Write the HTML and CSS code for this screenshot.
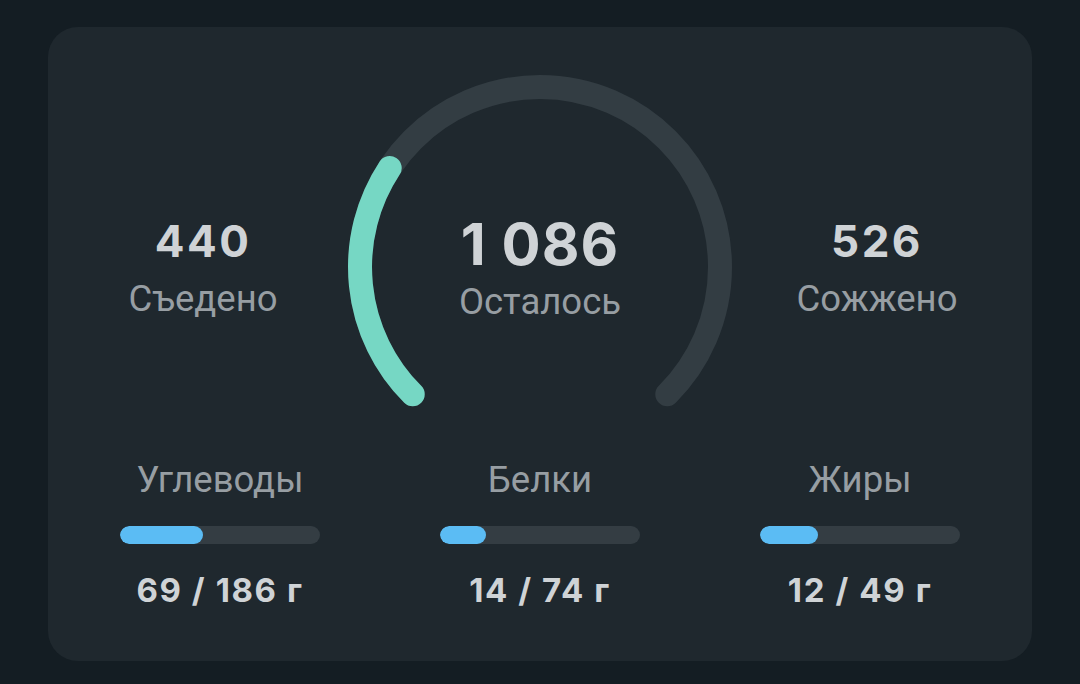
FILE: index.html
```html
<!DOCTYPE html>
<html lang="ru">
<head>
  <meta charset="UTF-8">
  <meta name="viewport" content="width=device-width, initial-scale=1.0">
  <title>Калории за день</title>
  <link rel="stylesheet" href="styles.css">
</head>
<body>
  <div class="card">
    <section class="summary">
      <div class="stat">
        <div class="stat-value">440</div>
        <div class="stat-label">Съедено</div>
      </div>

      <div class="gauge">
        <svg class="gauge-ring" width="384" height="340" viewBox="0 0 384 340">
          <path class="gauge-track" d="M 64.72 319.28 A 180 180 0 1 1 319.28 319.28" />
          <path class="gauge-fill" d="M 64.72 319.28 A 180 180 0 0 1 41.7 93" />
        </svg>
        <div class="gauge-text">
          <div class="gauge-value">1 086</div>
          <div class="stat-label">Осталось</div>
        </div>
      </div>

      <div class="stat">
        <div class="stat-value">526</div>
        <div class="stat-label">Сожжено</div>
      </div>
    </section>

    <section class="macros">
      <div class="macro">
        <div class="macro-name">Углеводы</div>
        <div class="macro-bar"><div class="macro-fill" style="width: 41.5%"></div></div>
        <div class="macro-value">69 / 186 г</div>
      </div>
      <div class="macro">
        <div class="macro-name">Белки</div>
        <div class="macro-bar"><div class="macro-fill" style="width: 23%"></div></div>
        <div class="macro-value">14 / 74 г</div>
      </div>
      <div class="macro">
        <div class="macro-name">Жиры</div>
        <div class="macro-bar"><div class="macro-fill" style="width: 29%"></div></div>
        <div class="macro-value">12 / 49 г</div>
      </div>
    </section>
  </div>
</body>
</html>
```

FILE: styles.css
```css
body {
  margin: 0;
  background: #141d23;
  font-family: 'Roboto', 'Noto Sans', sans-serif;
  color: #d0d4d7;
}

.card {
  margin: 27px 48px;
  padding: 48px 10px 51px;
  background: #1f282e;
  border-radius: 30px;
  box-sizing: border-box;
  height: 634px;
}

.summary {
  display: grid;
  grid-template-columns: 1fr 384px 1fr;
  height: 340px;
}

.stat {
  padding-top: 140px;
  text-align: center;
}

.stat-value {
  font-family: 'Inter', sans-serif;
  font-weight: 700;
  font-size: 44px;
  line-height: 52px;
  letter-spacing: 2.5px;
  color: #cfd3d6;
}

.stat-label {
  margin-top: 12px;
  font-size: 36.5px;
  line-height: 40px;
  color: #979ea3;
}

.gauge {
  position: relative;
}

.gauge-ring {
  display: block;
}

.gauge-track,
.gauge-fill {
  fill: none;
  stroke-width: 24;
  stroke-linecap: round;
}

.gauge-track {
  stroke: #333d43;
}

.gauge-fill {
  stroke: #76d7c4;
}

.gauge-text {
  position: absolute;
  top: 139px;
  left: 0;
  right: 0;
  text-align: center;
}

.gauge-value {
  font-family: 'Inter', sans-serif;
  font-weight: 700;
  font-size: 58px;
  line-height: 60px;
  letter-spacing: 1px;
  color: #cfd3d6;
}

.gauge-text .stat-label {
  margin-top: 8px;
}

.macros {
  display: grid;
  grid-template-columns: repeat(3, 320px);
  justify-content: center;
  margin-top: 45px;
}

.macro {
  display: flex;
  flex-direction: column;
  align-items: center;
}

.macro-name {
  font-size: 36.5px;
  line-height: 40px;
  color: #979ea3;
}

.macro-bar {
  width: 200px;
  height: 18px;
  margin-top: 26px;
  border-radius: 9px;
  background: #343d43;
  overflow: hidden;
}

.macro-fill {
  height: 100%;
  border-radius: 9px;
  background: #5bbcf4;
}

.macro-value {
  margin-top: 26px;
  font-family: 'Inter', sans-serif;
  font-weight: 700;
  font-size: 33px;
  line-height: 40px;
  letter-spacing: 1.6px;
  color: #cfd3d6;
}
```
